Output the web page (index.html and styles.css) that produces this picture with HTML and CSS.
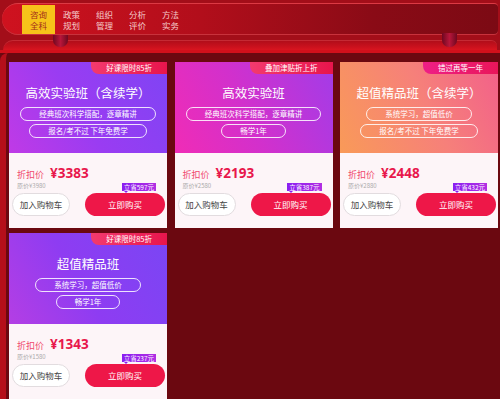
FILE: index.html
```html
<!DOCTYPE html>
<html lang="zh-CN">
<head>
<meta charset="utf-8">
<link rel="stylesheet" href="styles.css">
</head>
<body>
<div class="top">
  <nav class="navbar">
    <div class="nav-item active"><span>咨询</span><span>全科</span></div>
    <div class="nav-item"><span>政策</span><span>规划</span></div>
    <div class="nav-item"><span>组织</span><span>管理</span></div>
    <div class="nav-item"><span>分析</span><span>评价</span></div>
    <div class="nav-item"><span>方法</span><span>实务</span></div>
  </nav>
  <div class="band"></div>
  <div class="line"></div>
  <span class="hook hook-l"></span>
  <span class="hook hook-r"></span>
</div>
<main class="main">
  <div class="grid">
    <div class="card">
      <div class="head h-purple">
        <span class="tag tag-red">好课限时85折</span>
        <div class="title">高效实验班（含续学）</div>
        <div class="pill">经典班次科学搭配，逐章精讲</div>
        <div class="pill">报名/考不过 下年免费学</div>
      </div>
      <div class="foot">
        <div class="price-row"><span class="plabel">折扣价</span><span class="price">¥3383</span></div>
        <div class="sub-row"><span class="orig">原价¥3980</span><span class="save">立省597元</span></div>
        <div class="btn-row"><span class="btn btn-cart">加入购物车</span><span class="btn btn-buy">立即购买</span></div>
      </div>
    </div>
    <div class="card">
      <div class="head h-pink">
        <span class="tag tag-red">叠加津贴折上折</span>
        <div class="title">高效实验班</div>
        <div class="pill">经典班次科学搭配，逐章精讲</div>
        <div class="pill">畅学1年</div>
      </div>
      <div class="foot">
        <div class="price-row"><span class="plabel">折扣价</span><span class="price">¥2193</span></div>
        <div class="sub-row"><span class="orig">原价¥2580</span><span class="save">立省387元</span></div>
        <div class="btn-row"><span class="btn btn-cart">加入购物车</span><span class="btn btn-buy">立即购买</span></div>
      </div>
    </div>
    <div class="card">
      <div class="head h-orange">
        <span class="tag tag-magenta">错过再等一年</span>
        <div class="title">超值精品班（含续学）</div>
        <div class="pill">系统学习，超值低价</div>
        <div class="pill">报名/考不过 下年免费学</div>
      </div>
      <div class="foot">
        <div class="price-row"><span class="plabel">折扣价</span><span class="price">¥2448</span></div>
        <div class="sub-row"><span class="orig">原价¥2880</span><span class="save">立省432元</span></div>
        <div class="btn-row"><span class="btn btn-cart">加入购物车</span><span class="btn btn-buy">立即购买</span></div>
      </div>
    </div>
    <div class="card">
      <div class="head h-violet">
        <span class="tag tag-red">好课限时85折</span>
        <div class="title">超值精品班</div>
        <div class="pill">系统学习，超值低价</div>
        <div class="pill">畅学1年</div>
      </div>
      <div class="foot">
        <div class="price-row"><span class="plabel">折扣价</span><span class="price">¥1343</span></div>
        <div class="sub-row"><span class="orig">原价¥1580</span><span class="save">立省237元</span></div>
        <div class="btn-row"><span class="btn btn-cart">加入购物车</span><span class="btn btn-buy">立即购买</span></div>
      </div>
    </div>
  </div>
</main>
</body>
</html>
```
FILE: styles.css
```css
* { box-sizing: border-box; }
html, body { margin: 0; padding: 0; }
body {
  width: 500px;
  height: 399px;
  overflow: hidden;
  background: #6b0810;
  font-family: "Noto Sans CJK SC", "Noto Sans", sans-serif;
}
.top {
  position: relative;
  height: 53px;
  padding-top: 3px;
  background: #a30e19;
}
.navbar {
  display: flex;
  height: 32px;
  margin: 0 2px 0 2px;
  padding-left: 20px;
  border-top: 1px solid #dc3a44;
  border-radius: 16px 4px 4px 16px;
  background: linear-gradient(90deg, #cf121f 0%, #b20e1b 40%, #8a0b16 75%, #7c0a14 100%);
  box-shadow: inset 0 -1px 0 #c8323c;
}
.nav-item {
  width: 33px;
  margin-top: 1px;
  height: 29px;
  display: flex;
  flex-direction: column;
  align-items: center;
  justify-content: center;
  font-size: 8.5px;
  color: #f4c9c9;
}
.nav-item span {
  display: block;
  height: 11px;
  line-height: 11px;
  overflow: hidden;
}
.nav-item.active {
  background: #f7c21a;
  color: #a5301a;
}
.band {
  height: 10px;
  margin: 5px 3px 0 3px;
  border-radius: 10px 6px 0 0;
  background: linear-gradient(180deg, #b20e1a 0%, #c8111d 60%, #d8151f 100%);
  border-top: 1px solid #c52a34;
}
.line {
  height: 3px;
  background: #d1101b;
}
.hook {
  position: absolute;
  top: 35px;
  width: 15px;
  height: 12px;
  border-radius: 0 0 7px 7px;
  background: linear-gradient(90deg, #6e0820 0%, #b8163a 50%, #6e0820 100%);
}
.hook-l { left: 53px; }
.hook-r { left: 442px; top: 33px; height: 14px; }
.main {
  height: 346px;
  padding: 9px 0 0 3px;
  border-left: 6px solid #b50f1a;
  border-top-left-radius: 8px;
  background: #6b0810;
}
.grid {
  display: grid;
  grid-template-columns: repeat(3, 158px);
  grid-auto-rows: 166px;
  column-gap: 7.5px;
  row-gap: 5px;
}
.card {
  display: flex;
  flex-direction: column;
  background: #fdf5f8;
  overflow: hidden;
}
.head {
  position: relative;
  height: 91px;
  padding-top: 21px;
  display: flex;
  flex-direction: column;
  align-items: center;
  color: #fff;
}
.h-purple { background: linear-gradient(60deg, #c03ae6 0%, #9a3cf2 45%, #7f44f4 100%); }
.h-violet { background: linear-gradient(60deg, #b43ee4 0%, #8e3cf2 45%, #7a46f4 100%); }
.h-pink { background: linear-gradient(65deg, #f02cb6 0%, #d230cc 45%, #a23ce8 100%); }
.h-orange { background: linear-gradient(65deg, #f99a58 0%, #f6807a 55%, #f2608a 100%); }
.tag {
  position: absolute;
  top: 0;
  right: 0;
  height: 12px;
  padding: 0 15px;
  font-size: 7.5px;
  line-height: 12px;
  color: #fff;
  border-bottom-left-radius: 8px;
}
.tag-red { background: linear-gradient(90deg, #f33a6e, #e8154c); }
.tag-magenta { background: linear-gradient(90deg, #ee1f86, #e9165a); }
.title {
  font-size: 12.5px;
  line-height: 19px;
  height: 19px;
  margin-bottom: 5px;
}
.pill {
  height: 14px;
  padding: 0 18px;
  margin-bottom: 3px;
  border: 1px solid rgba(255,255,255,0.85);
  border-radius: 7px;
  font-size: 7.5px;
  line-height: 12px;
  white-space: nowrap;
}
.foot {
  flex: 1;
  padding: 12px 2px 0 3px;
}
.price-row {
  display: flex;
  align-items: baseline;
  height: 16px;
  padding-left: 5px;
}
.plabel {
  font-size: 9px;
  color: #f0476c;
  margin-right: 6px;
}
.price {
  font-family: "Noto Sans", "Noto Sans CJK SC", sans-serif;
  font-size: 13.5px;
  font-weight: 700;
  color: #e8174c;
  line-height: 16px;
}
.sub-row {
  display: flex;
  justify-content: space-between;
  align-items: center;
  height: 9px;
  padding: 0 9px 0 5px;
}
.orig {
  font-size: 6px;
  color: #aaa;
  line-height: 9px;
}
.save {
  position: relative;
  height: 8px;
  padding: 0 2px;
  font-size: 6.5px;
  line-height: 8px;
  color: #fff;
  background: linear-gradient(90deg, #8a1ff2, #b22ee2);
  margin-top: 2px;
}
.save::after {
  content: "";
  position: absolute;
  left: 2px;
  bottom: -2px;
  border-left: 2px solid transparent;
  border-right: 2px solid transparent;
  border-top: 2px solid #8a1ff2;
}
.btn-row {
  display: flex;
  justify-content: space-between;
  margin-top: 3px;
}
.btn {
  height: 23px;
  border-radius: 12px;
  font-size: 8.5px;
  line-height: 23px;
  text-align: center;
}
.btn-cart {
  width: 58px;
  background: #fff;
  border: 1px solid #e2dcdf;
  color: #444;
  line-height: 21px;
}
.btn-buy {
  width: 80px;
  background: #ee1748;
  color: #fff;
}
```
